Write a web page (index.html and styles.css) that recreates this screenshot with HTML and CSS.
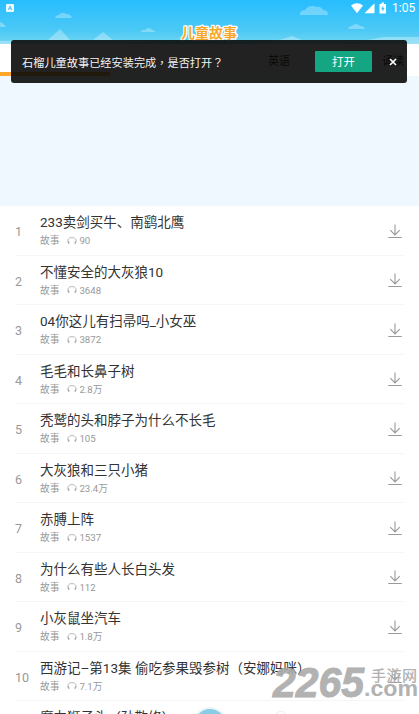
FILE: index.html
```html
<!DOCTYPE html>
<html lang="zh-CN">
<head>
<meta charset="utf-8">
<title>儿童故事</title>
<link rel="stylesheet" href="styles.css">
</head>
<body>
<svg class="defs" width="0" height="0">
  <symbol id="dl" viewBox="0 0 14 15"><path d="M7 .5v10.3M2.300 6.200 7 10.900l4.700-4.700M.3 13.500h13.400" fill="none" stroke="#999" stroke-width="1.100"/></symbol>
  <symbol id="ear" viewBox="0 0 10 8"><path d="M1.500 6.500C-.3 2.500 2 .6 5 .6s5.300 1.900 3.500 5.900" fill="none" stroke="#aaa" stroke-width=".8"/><path d="M1.300 4.300l.8 2.500M8.700 4.300l-.8 2.500" stroke="#aaa" stroke-width="1.200"/></symbol>
</svg>
<div class="app">
  <header class="header">
    <svg class="scene" width="419" height="44" viewBox="0 0 419 44">
      <g fill="#fff" fill-opacity=".3">
        <path d="M55 18q1-3 4-3 3-4 7-1 5 0 6 4zM300 15q-1-4 5-5 4-6 12-3 4-1 6 3 5 0 5 5zM348 29q1-3 4-3 4-4 8 0 4 0 5 3zM141 32q1-3 4-2 4-4 7 0 3 0 3 2zM0 22q4 1 6 5H0z"/>
        <path d="M48 40 60 29l10 11 23 0 10-8 10 8 50 2v2H0v-3zM279 40l13-4 10 4 60 1 22-4 35 0v7H250z"/>
      </g>
    </svg>
    <div class="status">
      <svg width="8" height="8" viewBox="0 0 8 8"><rect width="8" height="8" rx="1" fill="#fff" fill-opacity=".9"/><path d="M2.300 6 4 2l1.700 4M3 4.700h2" fill="none" stroke="#4bbdf0" stroke-width=".9"/></svg>
      <span class="space"></span>
      <svg width="36" height="12" viewBox="0 0 36 12"><path d="M0 3.400q6-4.200 12 0L6 11.200zM13.500 11.200h10v-10z" fill="#fff"/><path d="M28.500 2h2V.5h2.500V2h2v9.500h-6.500z" fill="#fff"/><path d="m32.200 3.500-2 3.700h1.300v2.500l2-3.700h-1.300z" fill="#35bff8"/></svg>
      <span class="time">1:05</span>
    </div>
    <svg class="logo" width="64" height="20" viewBox="0 0 64 20"><text x="4" y="15.500" textLength="56">儿童故事</text></svg>
  </header>
  <nav class="tabs"><span class="tab active"></span><span class="tab"></span><span class="tab eng">英语</span><span class="tab">诵读</span></nav>
  <div class="banner"></div>
  <main class="list">
    <div class="row"><span class="num">1</span><div class="info"><h2>233卖剑买牛、南鹞北鹰</h2><p>故事<svg><use href="#ear"/></svg><b>90</b></p></div><svg class="dl"><use href="#dl"/></svg></div>
    <div class="row"><span class="num">2</span><div class="info"><h2>不懂安全的大灰狼10</h2><p>故事<svg><use href="#ear"/></svg><b>3648</b></p></div><svg class="dl"><use href="#dl"/></svg></div>
    <div class="row"><span class="num">3</span><div class="info"><h2>04你这儿有扫帚吗_小女巫</h2><p>故事<svg><use href="#ear"/></svg><b>3872</b></p></div><svg class="dl"><use href="#dl"/></svg></div>
    <div class="row"><span class="num">4</span><div class="info"><h2>毛毛和长鼻子树</h2><p>故事<svg><use href="#ear"/></svg><b>2.8万</b></p></div><svg class="dl"><use href="#dl"/></svg></div>
    <div class="row"><span class="num">5</span><div class="info"><h2>秃鹫的头和脖子为什么不长毛</h2><p>故事<svg><use href="#ear"/></svg><b>105</b></p></div><svg class="dl"><use href="#dl"/></svg></div>
    <div class="row"><span class="num">6</span><div class="info"><h2>大灰狼和三只小猪</h2><p>故事<svg><use href="#ear"/></svg><b>23.4万</b></p></div><svg class="dl"><use href="#dl"/></svg></div>
    <div class="row"><span class="num">7</span><div class="info"><h2>赤膊上阵</h2><p>故事<svg><use href="#ear"/></svg><b>1537</b></p></div><svg class="dl"><use href="#dl"/></svg></div>
    <div class="row"><span class="num">8</span><div class="info"><h2>为什么有些人长白头发</h2><p>故事<svg><use href="#ear"/></svg><b>112</b></p></div><svg class="dl"><use href="#dl"/></svg></div>
    <div class="row"><span class="num">9</span><div class="info"><h2>小灰鼠坐汽车</h2><p>故事<svg><use href="#ear"/></svg><b>1.8万</b></p></div><svg class="dl"><use href="#dl"/></svg></div>
    <div class="row"><span class="num">10</span><div class="info"><h2>西游记–第13集 偷吃参果毁参树<i>（</i>安娜妈咪<i>）</i></h2><p>故事<svg><use href="#ear"/></svg><b>7.1万</b></p></div><svg class="dl"><use href="#dl"/></svg></div>
    <div class="row"><span class="num"></span><div class="info"><h2>魔力狮子头<i>（</i>孙敬修<i>）</i></h2></div></div>
  </main>
  <div class="toast"><span class="msg">石榴儿童故事已经安装完成<i lang="zh-TW">，</i>是否打开<i lang="zh-TW">？</i></span><button>打开</button><svg width="8" height="8" viewBox="0 0 8 8"><path d="m1 1 6 6M7 1 1 7" stroke="#fff" stroke-width="1.700"/></svg></div>
  <div class="player"></div>
  <div class="small-dot"></div>
  <svg class="mark" width="150" height="38" viewBox="0 0 150 38">
    <text class="m-num" x="4" y="31.500" textLength="91" lengthAdjust="spacingAndGlyphs">2265</text>
    <text class="m-cn" x="102" y="15.500" textLength="46">手游网</text>
    <text class="m-com" x="95" y="31" textLength="54" lengthAdjust="spacingAndGlyphs">.com</text>
  </svg>
</div>
</body>
</html>
```
FILE: styles.css
```css
* { box-sizing: border-box; }
body { margin: 0; overflow: hidden; background: #fff; font-family: Roboto, "Noto Sans CJK SC", sans-serif; }
.defs { position: absolute; }
.app { position: relative; width: 419px; height: 714px; overflow: hidden; }
.header { position: relative; height: 44px; background: linear-gradient(#27bdff, #4cc9f5 70%, #72d5f2); }
.scene { position: absolute; left: 0; top: 0; }
.status { position: relative; display: flex; align-items: center; height: 16px; padding: 0 3px 0 6px; }
.space { flex: 1; }
.time { margin-left: 5px; width: 24px; color: #fff; font-size: 12px; line-height: 16px; white-space: nowrap; }
.logo { position: absolute; left: 177px; top: 22px; }
.logo text { font: 700 14px "Noto Sans CJK SC", sans-serif; fill: #f9a826; stroke: #fff; stroke-width: 2.5px; paint-order: stroke; stroke-linejoin: round; }
.tabs { display: flex; height: 32px; overflow: hidden; font-size: 11px; line-height: 35px; color: #000; }
.tab { width: 110px; text-align: center; }
.tab.active { border-bottom: 4px solid #fca728; }
.tab.eng { width: 118px; }
.tabs .tab:last-child { flex: 1; min-width: 0; width: auto; padding-left: 44px; text-align: left; white-space: nowrap; }
.banner { height: 130px; background: #eff8fe; }
.list { padding: 0 15px; }
.row { display: flex; align-items: center; height: 49.5px; border-bottom: 1px solid #f6f6f6; }
.num { width: 25px; padding-top: 3px; color: #999; font-size: 12.5px; }
.info { flex: 1; align-self: flex-start; padding-top: 6px; white-space: nowrap; }
h2 { margin: 0; height: 20px; line-height: 20px; font-size: 13.5px; font-weight: 400; color: #333; }
i { font-style: normal; font-family: "Noto Sans CJK TC", sans-serif; line-height: 1; }
p { display: flex; align-items: center; margin: 0; height: 18px; font-size: 9.7px; line-height: 18px; color: #999; }
p svg { width: 10px; height: 8px; margin: 0 2px 1px 8px; }
p b { font-weight: 400; }
.row .dl { flex: none; width: 14px; height: 15px; margin: 2px 2px 0 0; }
.toast { position: absolute; left: 11px; top: 40px; width: 396px; height: 43px; padding: 0 10px 0 11px; display: flex; align-items: center; border-radius: 3px; background: rgba(10, 10, 10, .9); color: #f3f3f3; }
.msg { flex: 1; font-size: 11.2px; white-space: nowrap; }
.toast button { width: 57px; height: 21px; padding: 0; margin-right: 17px; border: 0; border-radius: 1px; background: #14a583; color: #fff; font: 11.5px/21px "Noto Sans CJK SC", sans-serif; }
.player { position: absolute; left: 192px; top: 707px; width: 36px; height: 36px; border: 2px solid #edf6f9; border-radius: 50%; background: #88cde4; }
.small-dot { position: absolute; left: 273px; top: 711px; width: 16px; height: 16px; border: 1px solid #eee; border-radius: 50%; }
.mark { position: absolute; left: 269px; top: 665px; opacity: .9; }
.mark text { fill: #aaa; }
.m-num { font: italic 700 42px "Liberation Sans", sans-serif; stroke: #aaa; stroke-width: 1px; }
.m-cn { font: 500 15px "Noto Sans CJK SC", sans-serif; }
.m-com { font: 700 22px "Liberation Sans", sans-serif; }
```
